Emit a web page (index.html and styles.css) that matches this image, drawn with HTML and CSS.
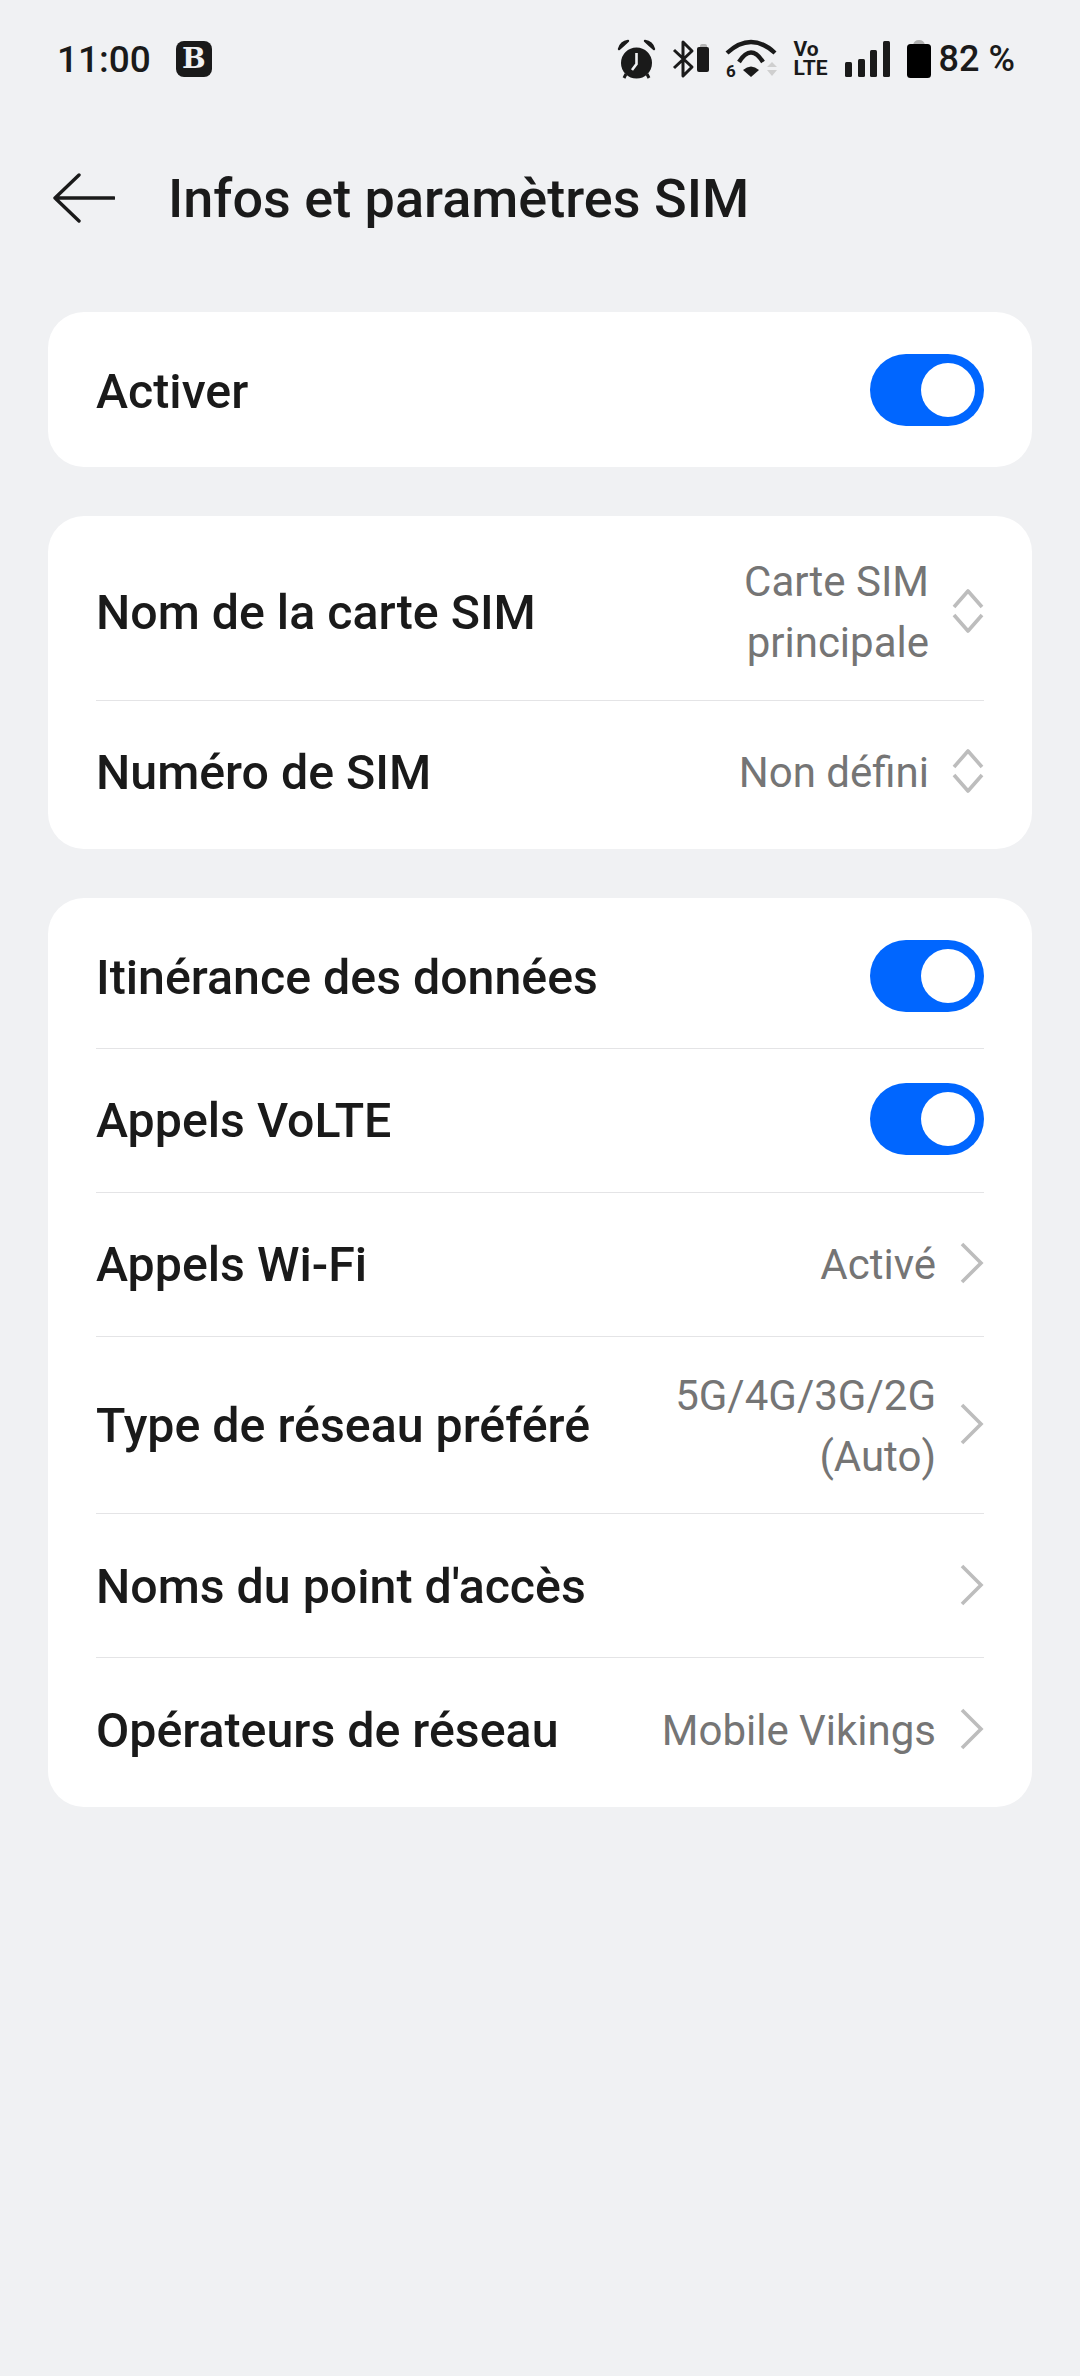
FILE: index.html
```html
<!DOCTYPE html>
<html lang="fr">
<head>
<meta charset="utf-8">
<title>Infos et paramètres SIM</title>
<link rel="stylesheet" href="styles.css">
</head>
<body>
<div class="status">
  <div class="status-left">
    <span class="time">11:00</span>
    <span class="b-badge">B</span>
  </div>
  <div class="status-right">
    <svg class="ic-alarm" width="38" height="38" viewBox="0 0 38 38"><circle cx="18.5" cy="23" r="15.5" fill="#1a1a1a"/><path d="M1 9 Q3 2 10 1 Q6 5 1 9 Z M36 9 Q34 2 27 1 Q31 5 36 9 Z" fill="#1a1a1a" stroke="#1a1a1a" stroke-width="2.4" stroke-linejoin="round"/><path d="M18.5 13 V24 L14 30" fill="none" stroke="#f0f1f3" stroke-width="2.6"/><path d="M8 34 L6 38 M29 34 L31 38" stroke="#1a1a1a" stroke-width="3"/></svg>
    <svg class="ic-bt" width="37" height="38" viewBox="0 0 37 38"><path d="M1 10 L19 27 L10 36 V2 L19 11 L1 28" fill="none" stroke="#1a1a1a" stroke-width="3" stroke-linejoin="round"/><rect x="27" y="4" width="7" height="5" rx="2" fill="#b5b5b5"/><rect x="24" y="7" width="12" height="25" rx="2" fill="#1a1a1a"/></svg>
    <svg class="ic-wifi" width="52" height="38" viewBox="0 0 52 38"><path d="M1 13 Q25 -9 49 13" fill="none" stroke="#1a1a1a" stroke-width="4.4"/><path d="M13 22 Q25 3 37 22" fill="none" stroke="#1a1a1a" stroke-width="4.4"/><path d="M17 30 Q25 23 33 30 L25 37 Z" fill="#1a1a1a"/><path d="M41 27 L46 22 L51 27 Z M41 30 L51 30 L46 36 Z" fill="#cfcfcf"/><text x="0" y="37" class="wifi-six">6</text></svg>
    <span class="volte"><span>Vo</span><span>LTE</span></span>
    <svg class="ic-signal" width="45" height="38" viewBox="0 0 45 38"><rect x="0" y="22" width="7" height="15" rx="1.5" fill="#1a1a1a"/><rect x="13" y="19" width="7" height="18" rx="1.5" fill="#1a1a1a"/><rect x="25" y="10" width="7" height="27" rx="1.5" fill="#1a1a1a"/><rect x="38" y="1" width="7" height="36" rx="1.5" fill="#1a1a1a"/></svg>
    <svg class="ic-batt" width="24" height="38" viewBox="0 0 24 38"><path d="M6 5 Q7 0 12 0 Q17 0 18 5 Z" fill="#b0b0b0"/><rect x="0" y="4" width="24" height="34" rx="3.5" fill="#000"/></svg>
    <span class="pct">82 %</span>
  </div>
</div>

<header class="header">
  <svg class="back" width="62" height="50" viewBox="0 0 62 50"><path d="M26 2 L2 25 L26 48 M2 25 H61" fill="none" stroke="#1a1a1a" stroke-width="3.4" stroke-linecap="round" stroke-linejoin="round"/></svg>
  <h1 class="title">Infos et paramètres SIM</h1>
</header>

<main class="cards">
  <section class="card">
    <div class="row"><span class="label">Activer</span><span class="switch"><span class="knob"></span></span></div>
  </section>

  <section class="card">
    <div class="row"><span class="label">Nom de la carte SIM</span>
      <div class="right right-tight"><span class="value">Carte SIM principale</span>
        <svg class="updown" width="32" height="44" viewBox="0 0 32 44"><path d="M2 18 L16 2 L30 18 M2 26 L16 42 L30 26" fill="none" stroke="#bdbdbd" stroke-width="3.6" stroke-linejoin="round"/></svg></div></div>
    <div class="row"><span class="label">Numéro de SIM</span>
      <div class="right right-tight"><span class="value">Non défini</span>
        <svg class="updown" width="32" height="44" viewBox="0 0 32 44"><path d="M2 18 L16 2 L30 18 M2 26 L16 42 L30 26" fill="none" stroke="#bdbdbd" stroke-width="3.6" stroke-linejoin="round"/></svg></div></div>
  </section>

  <section class="card">
    <div class="row"><span class="label">Itinérance des données</span><span class="switch"><span class="knob"></span></span></div>
    <div class="row"><span class="label">Appels VoLTE</span><span class="switch"><span class="knob"></span></span></div>
    <div class="row"><span class="label">Appels Wi-Fi</span>
      <div class="right"><span class="value">Activé</span>
        <svg class="chev" width="24" height="42" viewBox="0 0 24 42"><path d="M2 2 L21 21 L2 40" fill="none" stroke="#bdbdbd" stroke-width="3.6"/></svg></div></div>
    <div class="row"><span class="label">Type de réseau préféré</span>
      <div class="right"><span class="value">5G/4G/3G/2G (Auto)</span>
        <svg class="chev" width="24" height="42" viewBox="0 0 24 42"><path d="M2 2 L21 21 L2 40" fill="none" stroke="#bdbdbd" stroke-width="3.6"/></svg></div></div>
    <div class="row"><span class="label">Noms du point d'accès</span>
      <div class="right">
        <svg class="chev" width="24" height="42" viewBox="0 0 24 42"><path d="M2 2 L21 21 L2 40" fill="none" stroke="#bdbdbd" stroke-width="3.6"/></svg></div></div>
    <div class="row"><span class="label">Opérateurs de réseau</span>
      <div class="right"><span class="value">Mobile Vikings</span>
        <svg class="chev" width="24" height="42" viewBox="0 0 24 42"><path d="M2 2 L21 21 L2 40" fill="none" stroke="#bdbdbd" stroke-width="3.6"/></svg></div></div>
  </section>
</main>
</body>
</html>
```

FILE: styles.css
```css
* { box-sizing: border-box; }
html, body { margin: 0; padding: 0; }
body {
  width: 1080px;
  height: 2376px;
  background: #f0f1f3;
  font-family: Roboto, "Noto Sans", sans-serif;
  color: #1a1a1a;
  overflow: hidden;
}
.status {
  display: flex;
  justify-content: space-between;
  align-items: center;
  height: 46px;
  margin-top: 36px;
  padding: 0 65px 0 57px;
}
.status-left { display: flex; align-items: center; gap: 25px; }
.time { font-size: 37px; font-weight: 500; }
.b-badge {
  width: 36px;
  height: 36px;
  border-radius: 8px;
  background: #1a1a1a;
  color: #f0f1f3;
  font-family: "DejaVu Serif", serif;
  font-weight: 700;
  font-size: 28px;
  line-height: 36px;
  text-align: center;
}
.status-right { display: flex; align-items: center; }
.status-right svg { display: block; flex: none; overflow: visible; }
.ic-bt { margin-left: 17px; }
.ic-wifi { margin-left: 16px; }
.wifi-six { font: 700 17px Roboto, sans-serif; fill: #1a1a1a; }
.volte {
  display: flex;
  flex-direction: column;
  align-items: flex-start;
  margin-left: 16px;
  font-size: 21px;
  font-weight: 700;
  line-height: 19px;
  width: 34px;
}
.ic-signal { margin-left: 17px; }
.ic-batt { margin-left: 17px; }
.pct { margin-left: 8px; font-size: 36px; font-weight: 500; white-space: nowrap; }

.header {
  display: flex;
  align-items: center;
  height: 100px;
  margin-top: 66px;
  margin-bottom: 64px;
  padding-left: 53px;
}
.back { flex: none; }
.title {
  margin: 0 0 0 53px;
  font-size: 54px;
  font-weight: 500;
}

.cards {
  display: flex;
  flex-direction: column;
  gap: 49px;
  padding: 0 48px;
}
.card {
  background: #fff;
  border-radius: 36px;
  padding: 5.5px 48px;
}
.row {
  display: flex;
  align-items: center;
  justify-content: space-between;
  min-height: 144px;
  padding: 26.5px 0;
}
.row + .row { border-top: 1.5px solid #e4e4e6; padding-top: 25px; }
.label { padding-top: 3px; font-size: 48.3px; font-weight: 480; white-space: nowrap; }
.right { display: flex; align-items: center; gap: 24px; }
.right-tight { gap: 23px; }
.value {
  max-width: 290px;
  padding-top: 3px;
  font-size: 42px;
  line-height: 61px;
  color: #757575;
  text-align: right;
}
.updown, .chev { display: block; flex: none; }
.switch {
  display: flex;
  align-items: center;
  justify-content: flex-end;
  width: 114px;
  height: 72px;
  padding-right: 9px;
  border-radius: 36px;
  background: #0066ff;
}
.knob { width: 54px; height: 54px; border-radius: 50%; background: #fff; }
```
